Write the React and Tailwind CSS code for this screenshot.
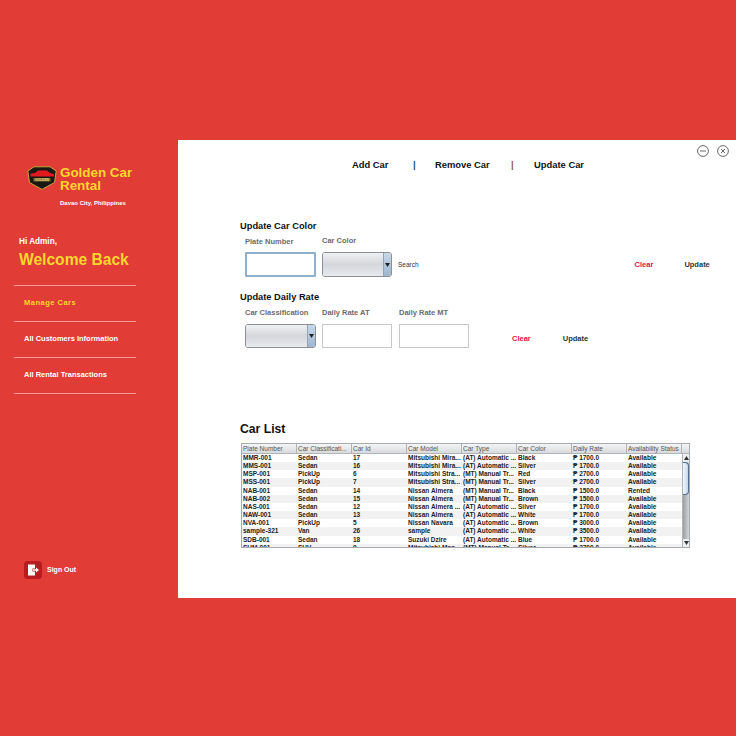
const sideLinks = [
  { label: 'Manage Cars', active: true },
  { label: 'All Customers Information' },
  { label: 'All Rental Transactions' },
]

const columns = ['Plate Number', 'Car Classificati...', 'Car Id', 'Car Model', 'Car Type', 'Car Color', 'Daily Rate', 'Availability Status']

const AT = '(AT) Automatic ...'
const MT = '(MT) Manual Tr...'

const cars = [
  ['MMR-001', 'Sedan', '17', 'Mitsubishi Mira...', AT, 'Black', '₱ 1700.0', 'Available'],
  ['MMS-001', 'Sedan', '16', 'Mitsubishi Mira...', AT, 'Silver', '₱ 1700.0', 'Available'],
  ['MSP-001', 'PickUp', '6', 'Mitsubishi Stra...', MT, 'Red', '₱ 2700.0', 'Available'],
  ['MSS-001', 'PickUp', '7', 'Mitsubishi Stra...', MT, 'Silver', '₱ 2700.0', 'Available'],
  ['NAB-001', 'Sedan', '14', 'Nissan Almera', MT, 'Black', '₱ 1500.0', 'Rented'],
  ['NAB-002', 'Sedan', '15', 'Nissan Almera', MT, 'Brown', '₱ 1500.0', 'Available'],
  ['NAS-001', 'Sedan', '12', 'Nissan Almera ...', AT, 'Silver', '₱ 1700.0', 'Available'],
  ['NAW-001', 'Sedan', '13', 'Nissan Almera', AT, 'White', '₱ 1700.0', 'Available'],
  ['NVA-001', 'PickUp', '5', 'Nissan Navara', AT, 'Brown', '₱ 3000.0', 'Available'],
  ['sample-321', 'Van', '26', 'sample', AT, 'White', '₱ 3500.0', 'Available'],
  ['SDB-001', 'Sedan', '18', 'Suzuki Dzire', AT, 'Blue', '₱ 1700.0', 'Available'],
  ['SUM-001', 'SUV', '9', 'Mitsubishi Mon...', MT, 'Silver', '₱ 2700.0', 'Available'],
]

function Logo() {
  return (
    <svg width="30" height="24" viewBox="0 0 30 24" className="shrink-0">
      <path d="M7 0.8 H23 L29.2 5 L27.5 16.5 L15 23.4 L2.5 16.5 L0.8 5 Z" fill="#1a1810" stroke="#c9a43a" strokeWidth="1" />
      <path d="M3.5 7.5 L8 7 L11 4.5 H20 L23 7 L27 8 V10.5 H3.5 Z" fill="#e0181f" />
      <rect x="6.5" y="12" width="17" height="3.5" fill="#7d6d38" />
      <text x="15" y="14.8" textAnchor="middle" fontSize="3.2" fontWeight="700" fill="#ecd27a">GOLDEN</text>
    </svg>
  )
}

function SignOutIcon() {
  return (
    <svg width="18" height="18" viewBox="0 0 18 18" className="shrink-0">
      <rect width="18" height="18" rx="3.5" fill="#b91c20" />
      <path d="M4 3.5 H11 V7.5 H8.5 V10.5 H11 V14.5 H4 Z" fill="#fff" />
      <path d="M9 8.2 H12 V6.5 L15 9 L12 11.5 V9.8 H9 Z" fill="#fff" />
    </svg>
  )
}

function Sidebar() {
  return (
    <aside className="w-[178px] shrink-0 flex flex-col text-white font-bold">
      <div className="flex gap-[3px] pl-[27px] pt-[26px]">
        <Logo />
        <p className="text-[13.4px] leading-[13px] text-[#fcd62f] w-[90px]">Golden Car Rental</p>
      </div>
      <p className="pl-[60px] mt-[7px] text-[6px] leading-[8px]">Davao City, Philippines</p>
      <p className="pl-[19px] mt-[30px] text-[8.2px] leading-[10px]">Hi Admin,</p>
      <p className="pl-[19px] mt-[5px] text-[15.6px] leading-[16px] text-[#fcd62f]">Welcome Back</p>
      <nav className="w-[122px] ml-[14px] mt-[17px] border-t border-[#f09a96]">
        {sideLinks.map((link) => (
          <div
            key={link.label}
            className={`h-[36px] flex items-center pl-[10px] pb-[2px] border-b border-[#f09a96] text-[7.5px] ${link.active ? 'text-[#fcd62f] tracking-[0.5px]' : 'text-white'}`}
          >
            {link.label}
          </div>
        ))}
      </nav>
      <div className="flex items-center gap-[5px] pl-[24px] mt-[167px] text-[7px]">
        <SignOutIcon />
        <span>Sign Out</span>
      </div>
    </aside>
  )
}

function WindowButton({ close }) {
  return (
    <svg width="12" height="12" viewBox="0 0 12 12" fill="none" stroke="#444" strokeWidth="0.8">
      <circle cx="6" cy="6" r="5.4" />
      {close ? <path d="M4 4 L8 8 M8 4 L4 8" /> : <path d="M3 6 H9" />}
    </svg>
  )
}

function Label({ className = '', children }) {
  return <span className={`text-[7.5px] leading-[10px] font-bold text-[#6b6b6b] ${className}`}>{children}</span>
}

function Dropdown({ className = '' }) {
  return (
    <div className={`h-full flex rounded-[3px] border border-[#8c8f94] overflow-hidden ${className}`}>
      <div className="flex-1 bg-gradient-to-b from-[#f0f1f3] via-[#d3d6db] to-[#e8eaed]" />
      <div className="w-[8px] flex items-center justify-center bg-gradient-to-b from-[#c9d8e8] to-[#9db6cf] border-l border-[#8ea4ba]">
        <svg width="5" height="4" viewBox="0 0 5 4"><path d="M0 0 H5 L2.5 4 Z" fill="#222" /></svg>
      </div>
    </div>
  )
}

function CarTable() {
  return (
    <div className="w-[449px] h-[105px] mt-[8px] border border-[#a8acb0] flex flex-col overflow-hidden text-[6.5px] leading-[8px]">
      <div className="flex h-[10px] shrink-0 bg-gradient-to-b from-[#f4f5f6] to-[#d8dadd] border-b border-[#b0b3b7] text-[#555]">
        {columns.map((c) => (
          <div key={c} className="w-[55px] shrink-0 pl-[1px] border-r border-[#b0b3b7] flex items-center whitespace-nowrap overflow-hidden">{c}</div>
        ))}
        <div className="flex-1" />
      </div>
      <div className="flex flex-1 min-h-0">
        <div className="w-[440px] shrink-0 overflow-hidden">
          {cars.map((row, i) => (
            <div key={row[0]} className={`flex h-[8.17px] font-bold text-[#222] ${i % 2 ? 'bg-[#f2f2f2]' : 'bg-white'}`}>
              {row.map((cell, j) => (
                <div key={j} className="w-[55px] shrink-0 pl-[1px] whitespace-nowrap overflow-hidden">{cell}</div>
              ))}
            </div>
          ))}
        </div>
        <div className="flex-1 flex flex-col bg-gradient-to-r from-[#9c9ea1] to-[#d4d6d9] border-l border-[#b0b3b7]">
          <div className="h-[8px] flex items-center justify-center bg-[#eceef0]">
            <svg width="5" height="4" viewBox="0 0 5 4"><path d="M2.5 0 L5 4 H0 Z" fill="#333" /></svg>
          </div>
          <div className="h-[33px] rounded-r-[4px] bg-gradient-to-r from-[#f3f7fb] to-[#c4d8ec] border border-l-0 border-[#4f6f90]" />
          <div className="flex-1" />
          <div className="h-[8px] flex items-center justify-center bg-[#eceef0]">
            <svg width="5" height="4" viewBox="0 0 5 4"><path d="M0 0 H5 L2.5 4 Z" fill="#333" /></svg>
          </div>
        </div>
      </div>
    </div>
  )
}

export default function App() {
  return (
    <div className="w-[736px] h-[736px] bg-[#e23c37] pt-[140px] font-['Liberation_Sans',sans-serif]">
      <div className="h-[458px] flex">
        <Sidebar />
        <main className="flex-1 bg-white flex flex-col">
          <div className="flex justify-end gap-[8px] pr-[7px] pt-[5px] h-[17px]">
            <WindowButton />
            <WindowButton close />
          </div>
          <div className="flex items-center h-[14px] mt-[1px] pl-[174px] text-[9.4px] font-bold text-[#111]">
            <span className="w-[61px]">Add Car</span>
            <span className="w-[22px] text-[#0b4f8a]">|</span>
            <span className="w-[76px]">Remove Car</span>
            <span className="w-[23px] text-[#8a5a1a]">|</span>
            <span>Update Car</span>
          </div>

          <div className="pl-[62px] flex flex-col">
            <h2 className="mt-[48px] h-[12px] text-[9.3px] leading-[12px] font-bold text-[#111]">Update Car Color</h2>
            <div className="flex mt-[4px] h-[10px] pl-[5px]">
              <Label className="w-[77px] mt-[1px]">Plate Number</Label>
              <Label>Car Color</Label>
            </div>
            <div className="flex items-center mt-[6px] h-[25px] pl-[5px]">
              <div className="w-[71px] h-full border-2 border-[#8fb0cc] rounded-[1px]" />
              <Dropdown className="w-[70px] ml-[6px]" />
              <span className="ml-[6px] text-[6.5px] text-[#333]">Search</span>
              <span className="ml-[216px] text-[7.5px] font-bold text-[#e0143c]">Clear</span>
              <span className="ml-[31px] text-[7.5px] font-bold text-[#1d3a3a]">Update</span>
            </div>

            <h2 className="mt-[14px] h-[12px] text-[9.3px] leading-[12px] font-bold text-[#111]">Update Daily Rate</h2>
            <div className="flex mt-[5px] h-[10px] pl-[5px]">
              <Label className="w-[77px]">Car Classification</Label>
              <Label className="w-[77px]">Daily Rate AT</Label>
              <Label>Daily Rate MT</Label>
            </div>
            <div className="flex items-center mt-[6px] h-[24px] pl-[5px]">
              <Dropdown className="w-[71px]" />
              <div className="w-[70px] h-full ml-[6px] border border-[#c8c8c8]" />
              <div className="w-[70px] h-full ml-[7px] border border-[#c8c8c8]" />
              <span className="ml-[43px] mt-[6px] text-[7.5px] font-bold text-[#e0143c]">Clear</span>
              <span className="ml-[32px] mt-[6px] text-[7.5px] font-bold text-[#1d3a3a]">Update</span>
            </div>

            <h2 className="mt-[74px] h-[14px] text-[12.2px] leading-[14px] font-bold text-[#111]">Car List</h2>
            <div className="pl-[1px] -mt-[1px]">
              <CarTable />
            </div>
          </div>
        </main>
      </div>
    </div>
  )
}
